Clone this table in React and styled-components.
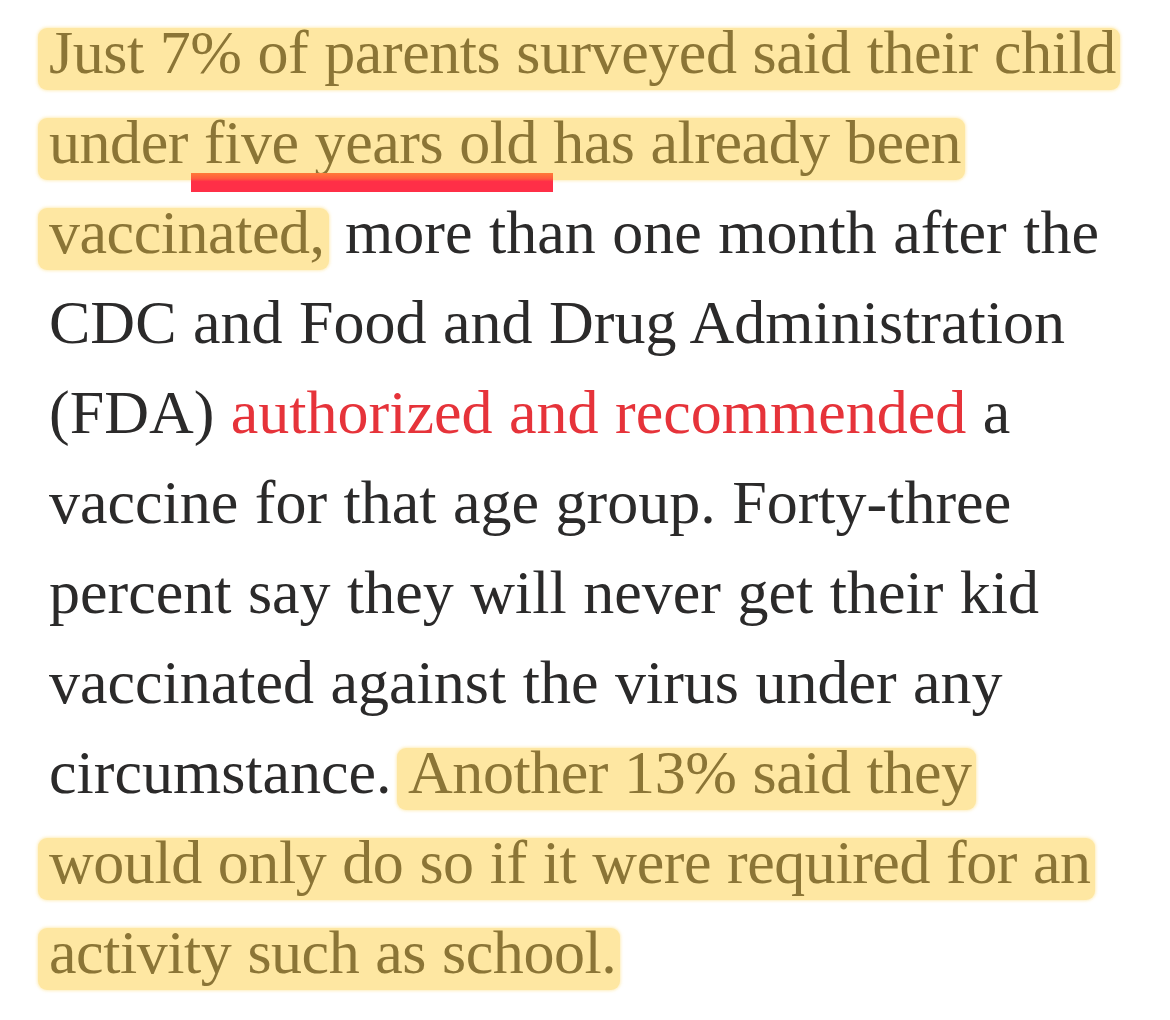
import styled, { createGlobalStyle } from "styled-components";

const GlobalStyle = createGlobalStyle`
    html, body {
        margin: 0;
        padding: 0;
        background: #ffffff;
    }
`;

const Article = styled.article`
    padding: 7px 30px 0 49px;
    font-family: "Liberation Serif", "Times New Roman", serif;
    font-size: 62px;
    line-height: 90px;
    color: #2b2a2a;
`;

const Para = styled.p`
    margin: 0;
    white-space: nowrap;
    word-spacing: 1px;
`;

// marker highlight, one per line so each piece gets its own rounded box
const Mark = styled.span`
    display: inline-block;
    margin-left: -11px;
    padding: 0 4px 14px 11px;
    line-height: 48px;
    letter-spacing: -0.45px;
    border-radius: 9px;
    background: #fee7a2;
    box-shadow: 0 0 3px 1px rgba(254, 231, 162, 0.7);
    color: #8b7536;
`;

const Underlined = styled.span`
    position: relative;

    &::after {
        content: "";
        position: absolute;
        left: 3px;
        right: 0;
        bottom: -16px;
        height: 19px;
        background: linear-gradient(to bottom, #ff7a38 0%, #ff5a3e 30%, #ff2f47 45%, #ff2f47 100%);
    }
`;

const Link = styled.a`
    color: #e6333a;
    text-decoration: none;
`;

function App() {
    return (
        <>
            <GlobalStyle />
            <Article>
                <Para>
                    <Mark>Just 7% of parents surveyed said their child</Mark>
                    <br />
                    <Mark>
                        under<Underlined>{" five years old "}</Underlined>has already been
                    </Mark>
                    <br />
                    <Mark>vaccinated,</Mark> more than one month after the
                    <br />
                    CDC and Food and Drug Administration
                    <br />
                    (FDA) <Link href="#">authorized and recommended</Link> a
                    <br />
                    vaccine for that age group. Forty-three
                    <br />
                    percent say they will never get their kid
                    <br />
                    vaccinated against the virus under any
                    <br />
                    circumstance. <Mark>Another 13% said they</Mark>
                    <br />
                    <Mark>would only do so if it were required for an</Mark>
                    <br />
                    <Mark>activity such as school.</Mark>
                </Para>
            </Article>
        </>
    );
}

export default App;
